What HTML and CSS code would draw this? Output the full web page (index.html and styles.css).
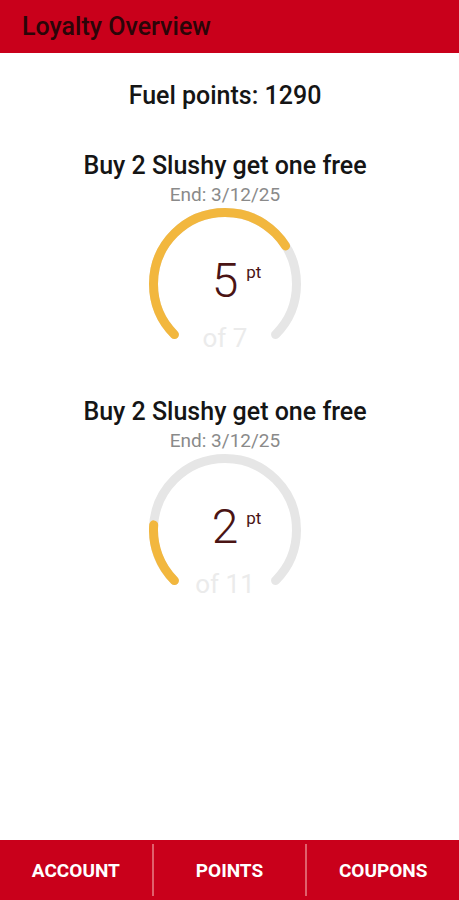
FILE: index.html
```html
<!DOCTYPE html>
<html lang="en">
<head>
    <meta charset="UTF-8">
    <meta name="viewport" content="width=device-width, initial-scale=1.0">
    <title>Loyalty Overview</title>
    <link rel="stylesheet" href="styles.css">
</head>
<body>
    <div class="app">
        <header class="topbar">
            <h1>Loyalty Overview</h1>
        </header>

        <main class="content">
            <p class="fuel">Fuel points: 1290</p>

            <div class="promo">
                <h2>Buy 2 Slushy get one free</h2>
                <p class="end">End: 3/12/25</p>
                <div class="gauge">
                    <svg width="152" height="152" viewBox="0 0 152 152">
                        <circle class="track" cx="76" cy="76" r="71.5" pathLength="360" stroke-dasharray="270 360" transform="rotate(135 76 76)"></circle>
                        <circle class="fill" cx="76" cy="76" r="71.5" pathLength="360" stroke-dasharray="192.9 360" transform="rotate(135 76 76)"></circle>
                    </svg>
                    <div class="value"><span class="num">5<span class="unit">pt</span></span></div>
                    <div class="total">of 7</div>
                </div>
            </div>

            <div class="promo">
                <h2>Buy 2 Slushy get one free</h2>
                <p class="end">End: 3/12/25</p>
                <div class="gauge">
                    <svg width="152" height="152" viewBox="0 0 152 152">
                        <circle class="track" cx="76" cy="76" r="71.5" pathLength="360" stroke-dasharray="270 360" transform="rotate(135 76 76)"></circle>
                        <circle class="fill" cx="76" cy="76" r="71.5" pathLength="360" stroke-dasharray="49.1 360" transform="rotate(135 76 76)"></circle>
                    </svg>
                    <div class="value"><span class="num">2<span class="unit">pt</span></span></div>
                    <div class="total">of 11</div>
                </div>
            </div>
        </main>

        <nav class="tabs">
            <a class="tab">ACCOUNT</a>
            <a class="tab">POINTS</a>
            <a class="tab">COUPONS</a>
        </nav>
    </div>
</body>
</html>
```

FILE: styles.css
```css
* {
    box-sizing: border-box;
}
body {
    margin: 0;
    font-family: Roboto, "Liberation Sans", sans-serif;
    background: white;
}
.app {
    height: 900px;
    display: flex;
    flex-direction: column;
}
.topbar {
    background-color: #c9001b;
    height: 53px;
    padding: 0 22px;
    display: flex;
    align-items: center;
}
.topbar h1 {
    margin: 0;
    font-size: 25px;
    line-height: 29px;
    font-weight: 500;
    color: #2b0508;
}
.content {
    flex: 1;
    display: flex;
    flex-direction: column;
    align-items: center;
    padding-right: 9px;
}
.fuel {
    margin: 28px 0 0;
    font-size: 25px;
    line-height: 30px;
    font-weight: 500;
    color: #151515;
}
.promo {
    display: flex;
    flex-direction: column;
    align-items: center;
    margin-top: 40px;
}
.promo + .promo {
    margin-top: 37px;
}
.promo h2 {
    margin: 0;
    font-size: 25px;
    line-height: 30px;
    font-weight: 500;
    color: #151515;
}
.end {
    margin: 3px 0 0;
    font-size: 19px;
    line-height: 22px;
    color: #8a8a8a;
}
.gauge {
    position: relative;
    width: 152px;
    height: 152px;
    margin-top: 2px;
}
.gauge svg {
    display: block;
}
.gauge circle {
    fill: none;
    stroke-width: 9;
    stroke-linecap: round;
}
.track { stroke: #e6e6e6; }
.fill { stroke: #f2b73e; }
.value {
    position: absolute;
    left: 0;
    right: 0;
    top: 49px;
    display: flex;
    justify-content: center;
}
.num {
    position: relative;
    font-size: 48px;
    line-height: 48px;
    font-weight: 300;
    color: #4a1414;
}
.unit {
    position: absolute;
    left: 100%;
    top: 7px;
    margin-left: 8px;
    font-size: 17px;
    line-height: 17px;
    font-weight: 400;
}
.total {
    position: absolute;
    left: 0;
    right: 0;
    top: 115px;
    text-align: center;
    font-size: 26px;
    line-height: 30px;
    color: #ebebeb;
}
.tabs {
    background-color: #c9001b;
    height: 60px;
    display: flex;
    align-items: center;
    padding: 4px 0;
}
.tab {
    flex: 1;
    height: 100%;
    display: flex;
    align-items: center;
    justify-content: center;
    color: white;
    font-size: 19px;
    font-weight: 700;
}
.tab + .tab {
    border-left: 2px solid #e0606c;
}
```
